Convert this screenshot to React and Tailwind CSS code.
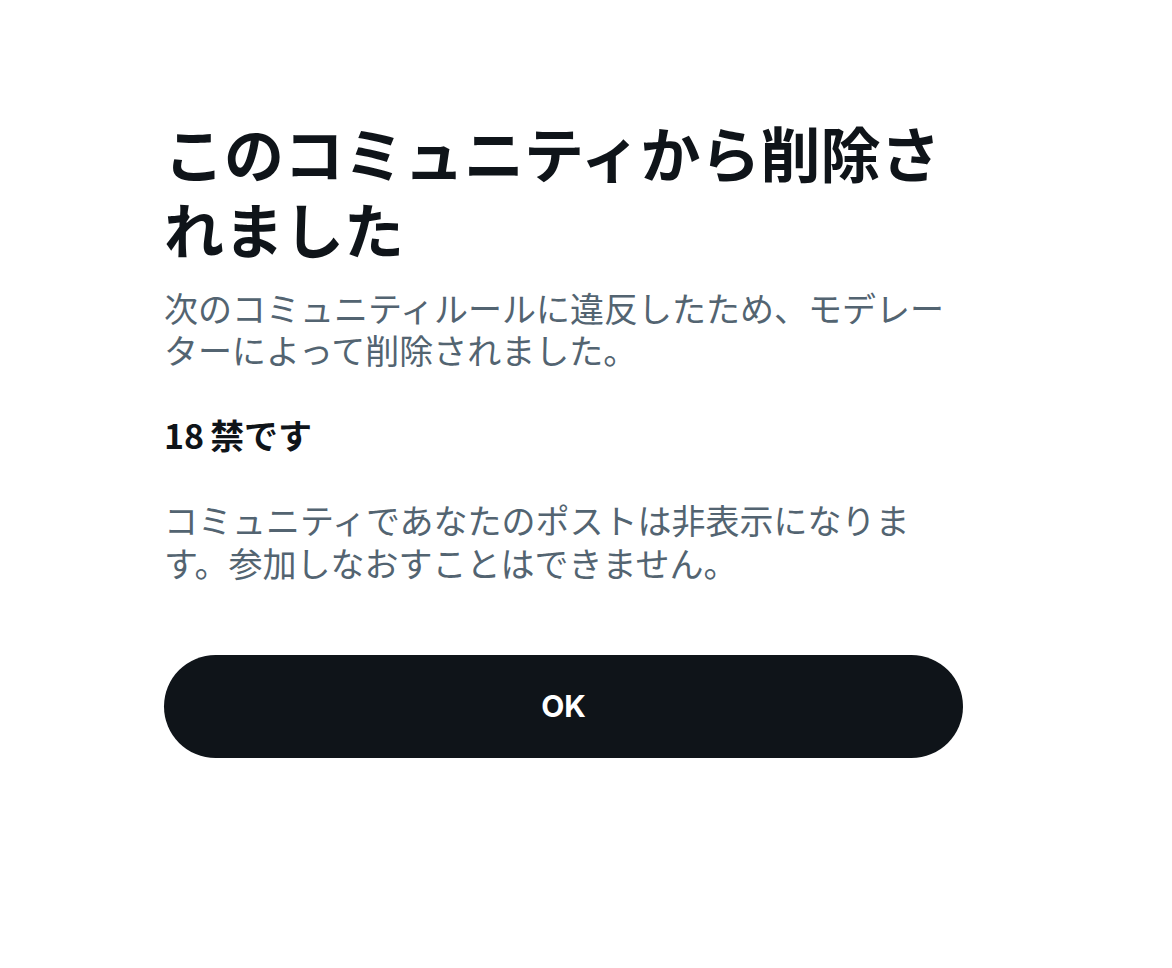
import React from "react";

const jp = "font-['Noto_Sans_CJK_JP','Noto_Sans',sans-serif]";

const RemovedNotice = () => {
  return (
    <div className="min-h-[968px] w-full bg-white">
      <div className="ml-[164px] w-[799px] pt-[114px]">
        {/* Heading */}
        <h1
          className={`${jp} text-[60px] font-bold leading-[76px] text-[#0f1419]`}
        >
          このコミュニティから削除されました
        </h1>

        {/* Reason */}
        <p className={`${jp} mt-[21px] text-[34px] leading-[42px] text-[#536471]`}>
          次のコミュニティルールに違反したため、モデレーターによって削除されました。
        </p>
        <p
          className={`${jp} mt-[43px] text-[34px] font-bold leading-[42px] text-[#0f1419]`}
        >
          <span className="mr-[6px]">18</span>禁です
        </p>
        <p className={`${jp} mt-[42px] text-[34px] leading-[43px] text-[#536471]`}>
          コミュニティであなたのポストは非表示になります。参加しなおすことはできません。
        </p>

        {/* Confirm */}
        <button
          className="mt-[71px] flex h-[103px] w-full items-center justify-center rounded-full bg-[#0f1419] font-['Inter','Noto_Sans',sans-serif] text-[30px] font-bold text-white"
        >
          OK
        </button>
      </div>
    </div>
  );
};

export default function App() {
  return <RemovedNotice />;
}
